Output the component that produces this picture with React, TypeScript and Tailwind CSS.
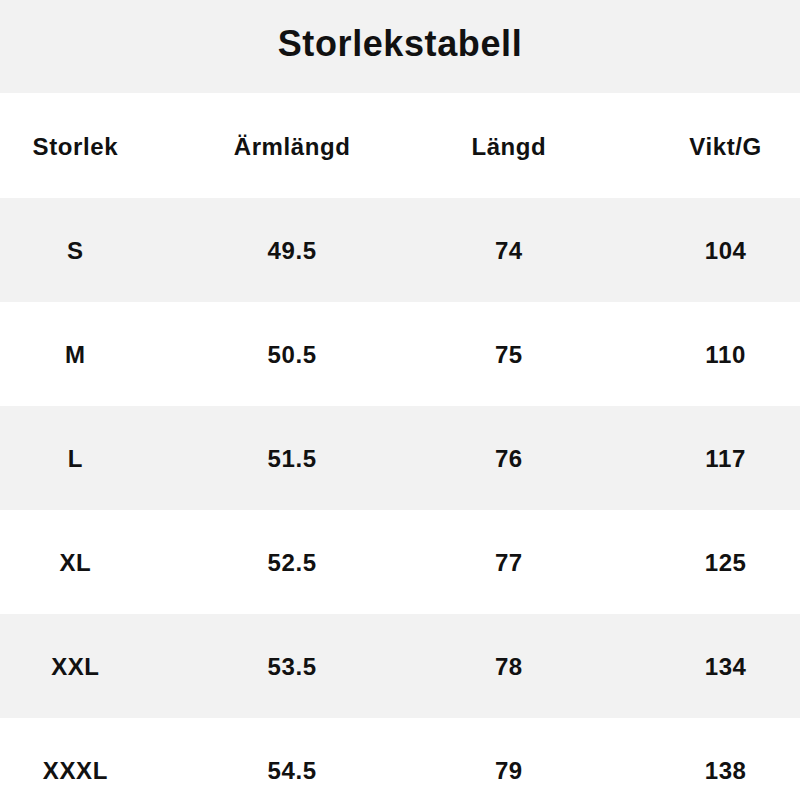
import React from 'react';

const rows = [
    ['S', '49.5', '74', '104'],
    ['M', '50.5', '75', '110'],
    ['L', '51.5', '76', '117'],
    ['XL', '52.5', '77', '125'],
    ['XXL', '53.5', '78', '134'],
    ['XXXL', '54.5', '79', '138'],
];

const headers = ['Storlek', 'Ärmlängd', 'Längd', 'Vikt/G'];

export default function App() {
    return (
        <div className="w-[800px] h-[800px] overflow-hidden bg-white text-[#111] font-['Liberation_Sans',Arial,sans-serif] font-bold">
            {/* Title */}
            <div className="h-[93px] bg-[#f2f2f2] flex items-center justify-center">
                <h1 className="text-[36px] leading-none tracking-[0.6px] pb-[5px]">Storlekstabell</h1>
            </div>

            <div className="w-[867px] -ml-[33px]">
                {/* Header row */}
                <div className="grid grid-cols-4 h-[105px] items-center bg-white text-[24px] tracking-[0.6px] pt-[2px]">
                    {headers.map((h) => (
                        <div key={h} className="text-center">{h}</div>
                    ))}
                </div>

                {/* Data rows */}
                {rows.map((r, i) => (
                    <div
                        key={r[0]}
                        className={`grid grid-cols-4 h-[104px] items-center text-[24px] tracking-[0.6px] pt-[2px] ${i % 2 === 0 ? 'bg-[#f2f2f2]' : 'bg-white'}`}
                    >
                        {r.map((c, j) => (
                            <div key={j} className="text-center">{c}</div>
                        ))}
                    </div>
                ))}
            </div>
        </div>
    );
}
